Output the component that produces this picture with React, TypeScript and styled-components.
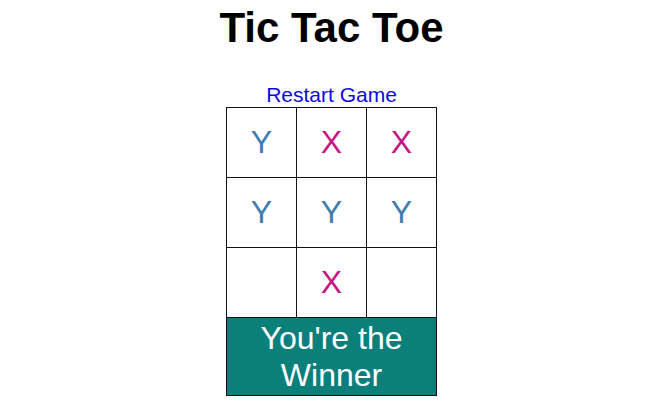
import React, { useState } from "react";
import styled, { createGlobalStyle } from "styled-components";

const GlobalStyle = createGlobalStyle`
  body {
    margin: 0;
    background: white;
    font-family: "Liberation Sans", Arial, Helvetica, sans-serif;
  }
`;

const Page = styled.div`
  display: flex;
  flex-direction: column;
  align-items: center;
  padding-top: 4px;
`;

const Title = styled.h1`
  margin: 0;
  font-size: 42px;
  line-height: 48px;
  font-weight: bold;
  color: black;
`;

const RestartButton = styled.button`
  margin-top: 31px;
  padding: 0;
  border: none;
  background: none;
  font-family: inherit;
  font-size: 21px;
  line-height: 24px;
  color: #0a0ae6;
  cursor: pointer;
`;

const Board = styled.div`
  display: grid;
  grid-template-columns: repeat(3, 70px);
  grid-auto-rows: 70px;
  border-top: 1px solid #111;
  border-left: 1px solid #111;
`;

type SquareProps = {
  mark: "X" | "Y" | null;
};

const Square = styled.div<SquareProps>`
  display: flex;
  align-items: center;
  justify-content: center;
  border-right: 1px solid #111;
  border-bottom: 1px solid #111;
  font-size: 32px;
  color: ${({ mark }) => (mark === "X" ? "#c71585" : "#3f7db2")};
`;

const Winner = styled.div`
  box-sizing: border-box;
  width: 211px;
  padding: 2px 0 1px;
  background: #0b807b;
  border: 1px solid #111;
  border-top: none;
  color: white;
  font-size: 32px;
  text-align: center;
`;

const startBoard: ("X" | "Y" | null)[] = [
  "Y", "X", "X",
  "Y", "Y", "Y",
  null, "X", null,
];

const App = () => {
  const [squares] = useState(startBoard);

  return (
    <Page>
      <GlobalStyle />
      <Title>Tic Tac Toe</Title>
      <RestartButton>Restart Game</RestartButton>
      <Board>
        {squares.map((mark, i) => (
          <Square key={i} mark={mark}>
            {mark}
          </Square>
        ))}
      </Board>
      <Winner>You're the Winner</Winner>
    </Page>
  );
};

export default App;
